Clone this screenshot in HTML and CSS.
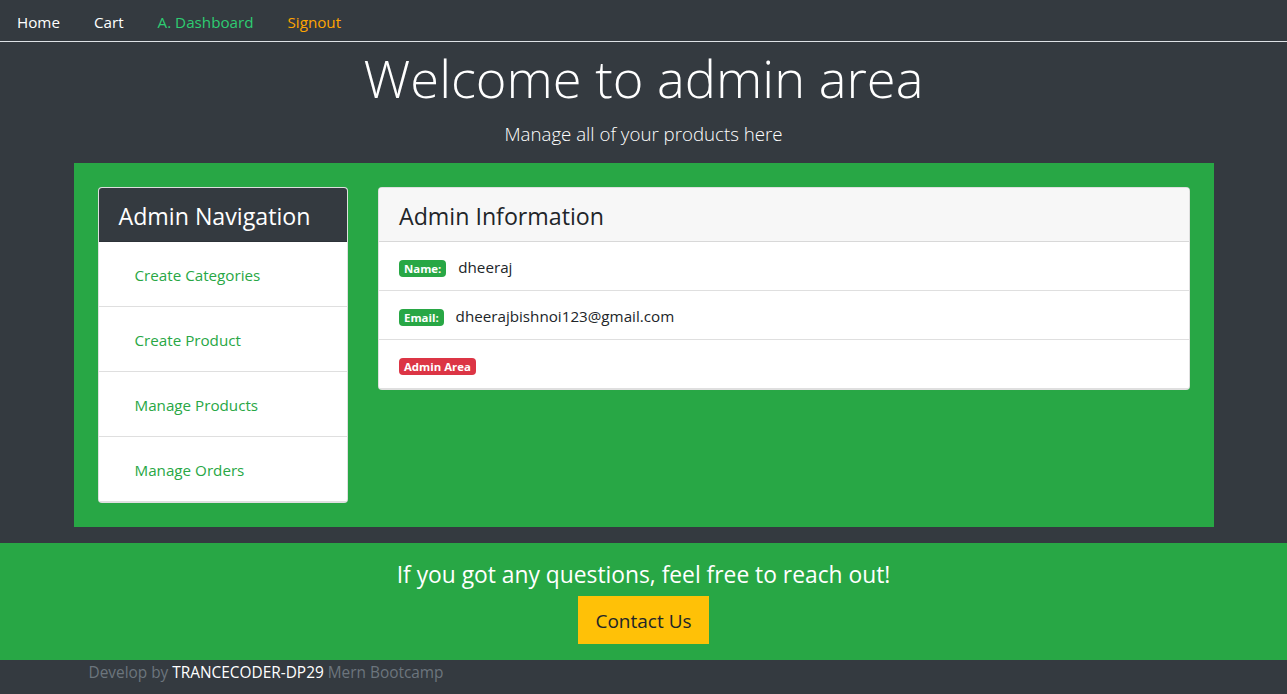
FILE: index.html
```html
<!DOCTYPE html>
<html lang="en">
<head>
<meta charset="utf-8">
<title>Admin Dashboard</title>
<link rel="stylesheet" href="styles.css">
</head>
<body>
<ul class="nav">
  <li><a class="nav-link link-white" href="#">Home</a></li>
  <li><a class="nav-link link-white" href="#">Cart</a></li>
  <li><a class="nav-link link-green" href="#">A. Dashboard</a></li>
  <li><a class="nav-link link-orange" href="#">Signout</a></li>
</ul>
<div class="hero">
  <h2 class="hero-title">Welcome to admin area</h2>
  <p class="hero-lead">Manage all of your products here</p>
</div>
<div class="main">
  <div class="row">
    <div class="col-left">
      <div class="card">
        <h4 class="card-header header-dark">Admin Navigation</h4>
        <ul class="list">
          <li class="list-item"><a class="list-link" href="#">Create Categories</a></li>
          <li class="list-item"><a class="list-link" href="#">Create Product</a></li>
          <li class="list-item"><a class="list-link" href="#">Manage Products</a></li>
          <li class="list-item"><a class="list-link" href="#">Manage Orders</a></li>
        </ul>
      </div>
    </div>
    <div class="col-right">
      <div class="card">
        <h4 class="card-header header-light">Admin Information</h4>
        <ul class="list">
          <li class="list-item info-item"><span class="badge badge-success">Name:</span> dheeraj</li>
          <li class="list-item info-item"><span class="badge badge-success">Email:</span> dheerajbishnoi123@gmail.com</li>
          <li class="list-item info-item"><span class="badge badge-danger">Admin Area</span></li>
        </ul>
      </div>
    </div>
  </div>
</div>
<footer class="footer">
  <div class="footer-band">
    <h4 class="footer-title">If you got any questions, feel free to reach out!</h4>
    <button class="btn-contact">Contact Us</button>
  </div>
  <div class="footer-credit">
    <span class="muted">Develop by <span class="white">TRANCECODER-DP29</span> Mern Bootcamp</span>
  </div>
</footer>
</body>
</html>
```
FILE: styles.css
```css
* { box-sizing: border-box; }
html, body {
  margin: 0;
  padding: 0;
}
body {
  background: #343a40;
  font-family: "Open Sans", "Noto Sans", sans-serif;
  font-size: 15.2px;
  line-height: 24px;
  color: #212529;
}
a { text-decoration: none; }

.nav {
  display: flex;
  list-style: none;
  margin: 0;
  padding: 0;
  border-bottom: 1px solid #dee2e6;
}
.nav-link {
  display: block;
  padding: 9px 16px 7px;
  border: 1px solid transparent;
  margin-bottom: -1px;
}
.link-white { color: #ffffff; }
.link-green { color: #2ecc72; }
.link-orange { color: #ffa500; }

.hero {
  text-align: center;
  color: #fff;
}
.hero-title {
  margin: 0 0 6px;
  padding-top: 2px;
  font-size: 52.4px;
  font-weight: 300;
  line-height: 67.2px;
}
.hero-lead {
  margin: 0 0 14px;
  padding-top: 2px;
  font-size: 18.7px;
  font-weight: 300;
  line-height: 30px;
}

.main {
  width: 1140px;
  margin: 0 auto;
  background: #28a745;
  padding: 24px;
}
.row {
  display: flex;
  gap: 30px;
  align-items: flex-start;
}
.col-left { flex: 0 0 250.5px; }
.col-right { flex: 1 1 auto; }

.card {
  background: #fff;
  border: 1px solid rgba(0,0,0,.125);
  border-radius: 4px;
  overflow: hidden;
}
.card-header {
  margin: 0;
  padding: 14px 20px 10px;
  font-size: 23.2px;
  font-weight: 500;
  line-height: 28.8px;
  border-bottom: 1px solid rgba(0,0,0,.125);
}
.header-dark { background: #343a40; color: #fff; }
.header-light { background: #f7f7f7; color: #212529; }

.list {
  list-style: none;
  margin: 0;
  padding: 0;
}
.list-item {
  padding: 13px 20px 11px;
  border-bottom: 1px solid rgba(0,0,0,.125);
}
.list-link {
  display: block;
  padding: 8px 16px;
  color: #28a745;
}
.info-item { color: #212529; }

.badge {
  display: inline-block;
  padding: 3px 5px;
  margin-right: 8px;
  font-size: 11.4px;
  font-weight: 700;
  line-height: 1;
  color: #fff;
  border-radius: 4px;
  vertical-align: baseline;
}
.badge-success { background: #28a745; }
.badge-danger { background: #dc3545; }

.footer {
  margin-top: 16px;
}
.footer-band {
  background: #28a745;
  color: #fff;
  text-align: center;
  padding: 16px 0;
}
.footer-title {
  margin: 0 0 6px;
  padding-top: 2px;
  font-size: 22.8px;
  font-weight: 500;
  line-height: 28.8px;
}
.btn-contact {
  font-family: inherit;
  font-size: 19px;
  line-height: 30px;
  padding: 9px 16px 7px;
  background: #ffc107;
  color: #212529;
  border: 1px solid #ffc107;
  border-radius: 0;
}
.footer-credit {
  width: 1140px;
  margin: 0 auto;
  padding: 1px 15px 15px;
  font-size: 15.4px;
}
.muted { color: #6c757d; }
.white { color: #fff; }
```
